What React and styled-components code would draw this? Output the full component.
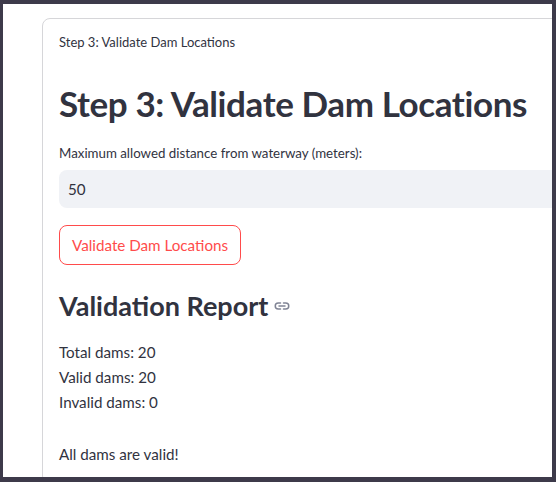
import React from 'react'
import styled, { createGlobalStyle } from 'styled-components'

const Global = createGlobalStyle`
  html, body {
    margin: 0;
    padding: 0;
    background: #3d3a4a;
  }
  body {
    font-family: Lato, "Liberation Sans", sans-serif;
    color: #31333f;
  }
`

const Frame = styled.div`
  box-sizing: border-box;
  width: 556px;
  height: 482px;
  padding: 4px 4px 5px 3px;
  display: flex;
`

const Page = styled.div`
  flex: 1;
  background: #fff;
  overflow: hidden;
  padding: 14px 0 0 39px;
`

const Card = styled.div`
  width: 560px;
  border: 1px solid #d6d6d9;
  border-radius: 8px;
  padding: 14px 16px 16px;
  display: flex;
  flex-direction: column;
`

const Caption = styled.div`
  font-size: 13px;
  line-height: 18px;
`

const Title = styled.h1`
  margin: 29px 0 0;
  font-size: 35px;
  letter-spacing: -0.4px;
  font-weight: 700;
  line-height: 46px;
`

const Label = styled.label`
  margin-top: 17px;
  font-size: 13.3px;
  line-height: 20px;
`

const Input = styled.div`
  margin-top: 7px;
  height: 38px;
  background: #f0f2f6;
  border-radius: 8px;
  display: flex;
  align-items: center;
  padding: 0 9px;
  font-size: 15.2px;
`

const Button = styled.button`
  align-self: flex-start;
  margin-top: 17px;
  height: 40px;
  padding: 0 12px;
  background: #fff;
  border: 1px solid #ff4b4b;
  border-radius: 8px;
  color: #ff4b4b;
  font-family: inherit;
  font-size: 15.2px;
`

const Heading = styled.h3`
  margin: 24px 0 0;
  display: flex;
  align-items: center;
  gap: 5px;
  font-size: 27px;
  font-weight: 700;
  line-height: 34px;
`

const Report = styled.div`
  margin-top: 17px;
  font-size: 15.2px;
  line-height: 25px;
`

const Gap = styled.div`
  height: 27px;
`

const LinkIcon = () => (
  <svg width="18" height="18" viewBox="0 0 24 24" fill="none" stroke="#808495" strokeWidth="2" strokeLinecap="round">
    <path d="M10 8H7a4 4 0 0 0 0 8h3" />
    <path d="M14 8h3a4 4 0 0 1 0 8h-3" />
    <path d="M8 12h8" />
  </svg>
)

export default function App() {
  return (
    <>
      <Global />
      <Frame>
        <Page>
          <Card>
            <Caption>Step 3: Validate Dam Locations</Caption>
            <Title>Step 3: Validate Dam Locations</Title>
            <Label>Maximum allowed distance from waterway (meters):</Label>
            <Input>50</Input>
            <Button>Validate Dam Locations</Button>
            <Heading>
              Validation Report <LinkIcon />
            </Heading>
            <Report>
              <div>Total dams: 20</div>
              <div>Valid dams: 20</div>
              <div>Invalid dams: 0</div>
              <Gap />
              <div>All dams are valid!</div>
            </Report>
          </Card>
        </Page>
      </Frame>
    </>
  )
}
